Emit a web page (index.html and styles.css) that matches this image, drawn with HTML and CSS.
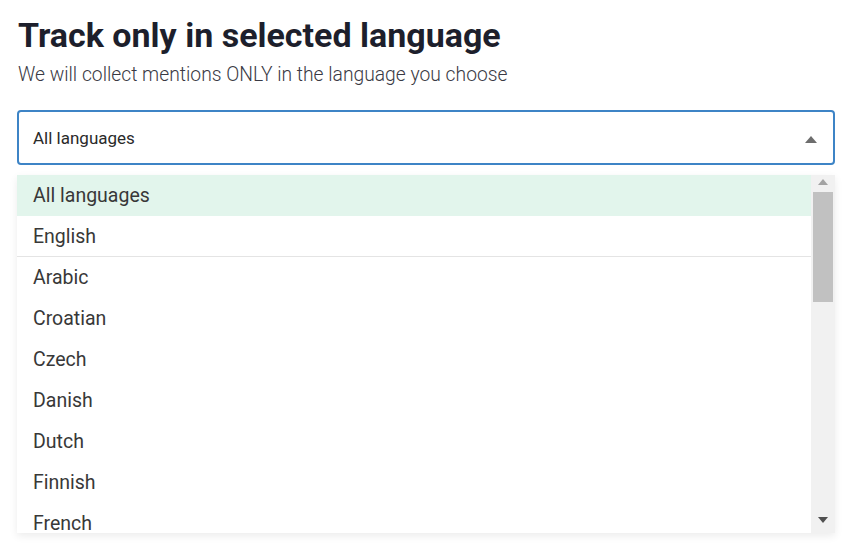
FILE: index.html
```html
<!DOCTYPE html>
<html>
<head>
<meta charset="utf-8">
<link rel="stylesheet" href="styles.css">
</head>
<body>
<div class="page">
  <h1 class="title">Track only in selected language</h1>
  <p class="subtitle">We will collect mentions ONLY in the language you choose</p>
  <div class="select">
    <span class="select-value">All languages</span>
    <span class="caret"></span>
  </div>
  <div class="dropdown">
    <ul class="options">
      <li class="option selected">All languages</li>
      <li class="option sep">English</li>
      <li class="option">Arabic</li>
      <li class="option">Croatian</li>
      <li class="option">Czech</li>
      <li class="option">Danish</li>
      <li class="option">Dutch</li>
      <li class="option">Finnish</li>
      <li class="option">French</li>
    </ul>
    <div class="scrollbar">
      <span class="sb-up"></span>
      <span class="sb-thumb"></span>
      <span class="sb-track"></span>
      <span class="sb-down"></span>
    </div>
  </div>
</div>
</body>
</html>
```

FILE: styles.css
```css
html, body {
  margin: 0;
  padding: 0;
  background: #ffffff;
}
body {
  font-family: Roboto, "Liberation Sans", sans-serif;
  width: 846px;
  height: 556px;
  overflow: hidden;
}
.page {
  padding: 16px 11px 0 17px;
}
.title {
  margin: 0 0 0 1px;
  font-size: 34px;
  font-weight: 700;
  line-height: 39px;
  color: #1d1f2c;
}
.subtitle {
  margin: 8px 0 0 1px;
  font-size: 19.3px;
  font-weight: 300;
  line-height: 24px;
  color: #3a3a44;
}
.select {
  margin-top: 23px;
  height: 51px;
  border: 2px solid #3d84c6;
  border-radius: 4px;
  display: flex;
  align-items: center;
  padding: 0 16px 0 14px;
  box-sizing: content-box;
}
.select-value {
  flex: 1;
  font-size: 17px;
  color: #2a2a2a;
  padding-top: 1px;
}
.caret {
  width: 0;
  height: 0;
  border-left: 6px solid transparent;
  border-right: 6px solid transparent;
  border-bottom: 7px solid #6d6d6d;
  margin-top: 4px;
}
.dropdown {
  margin-top: 10px;
  height: 358px;
  display: flex;
  box-shadow: 0 3px 8px rgba(0, 0, 0, 0.08);
  background: #fff;
}
.options {
  list-style: none;
  margin: 0;
  padding: 0;
  flex: 1;
  overflow: hidden;
}
.option {
  height: 41px;
  line-height: 41px;
  padding-left: 16px;
  font-size: 19.5px;
  color: #383838;
  box-sizing: border-box;
}
.option.selected {
  background: #e2f5ec;
}
.option.sep {
  border-bottom: 1px solid #e4e4e4;
}
.scrollbar {
  width: 24px;
  background: #f1f1f1;
  display: flex;
  flex-direction: column;
  align-items: center;
}
.sb-up {
  margin-top: 4px;
  width: 0;
  height: 0;
  border-left: 5px solid transparent;
  border-right: 5px solid transparent;
  border-bottom: 6px solid #a3a3a3;
}
.sb-thumb {
  margin-top: 7px;
  width: 20px;
  height: 110px;
  background: #c1c1c1;
}
.sb-track {
  flex: 1;
}
.sb-down {
  margin-bottom: 10px;
  width: 0;
  height: 0;
  border-left: 5px solid transparent;
  border-right: 5px solid transparent;
  border-top: 6px solid #505050;
}
```
